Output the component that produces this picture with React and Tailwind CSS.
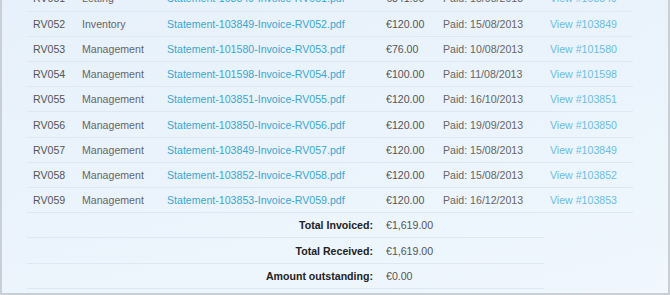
import React from "react";

const rows = [
  { ref: "RV051", cat: "Letting", stmt: "103849", amount: "€341.00", paid: "15/08/2013" },
  { ref: "RV052", cat: "Inventory", stmt: "103849", amount: "€120.00", paid: "15/08/2013" },
  { ref: "RV053", cat: "Management", stmt: "101580", amount: "€76.00", paid: "10/08/2013" },
  { ref: "RV054", cat: "Management", stmt: "101598", amount: "€100.00", paid: "11/08/2013" },
  { ref: "RV055", cat: "Management", stmt: "103851", amount: "€120.00", paid: "16/10/2013" },
  { ref: "RV056", cat: "Management", stmt: "103850", amount: "€120.00", paid: "19/09/2013" },
  { ref: "RV057", cat: "Management", stmt: "103849", amount: "€120.00", paid: "15/08/2013" },
  { ref: "RV058", cat: "Management", stmt: "103852", amount: "€120.00", paid: "15/08/2013" },
  { ref: "RV059", cat: "Management", stmt: "103853", amount: "€120.00", paid: "16/12/2013" },
];

const totals = [
  { label: "Total Invoiced:", value: "€1,619.00" },
  { label: "Total Received:", value: "€1,619.00" },
  { label: "Amount outstanding:", value: "€0.00" },
];

const App = () => {
  return (
    <div className="w-[670px] h-[295px] overflow-hidden border-l-2 border-r-2 border-b-2 border-[#c9cfd5] bg-[linear-gradient(165deg,#e7f1fb_0%,#ebf4fc_55%,#f0f7fe_100%)] font-['Liberation_Sans',sans-serif] text-[10.6px]">
      <div className="pl-[25px] -mt-[14px]">
        <table className="border-collapse table-fixed w-[606px]">
          <colgroup>
            <col className="w-[49px]" />
            <col className="w-[85px]" />
            <col className="w-[219px]" />
            <col className="w-[57px]" />
            <col className="w-[107px]" />
            <col className="w-[89px]" />
          </colgroup>
          <tbody>
            {rows.map((r) => (
              <tr key={r.ref} className="h-[25.2px] border-b border-[#dde8f2]">
                <td className="pl-[6px] pt-[2px] text-[#555]">{r.ref}</td>
                <td className="pl-[6px] pt-[2px] text-[#666]">{r.cat}</td>
                <td className="pl-[6px] pt-[2px] text-[#3aa7d1] whitespace-nowrap">
                  Statement-{r.stmt}-Invoice-{r.ref}.pdf
                </td>
                <td className="pl-[6px] pt-[2px] text-[#555]">{r.amount}</td>
                <td className="pl-[6px] pt-[2px] text-[#666]">Paid: {r.paid}</td>
                <td className="pl-[6px] pt-[2px] text-[#6cbde2]">View #{r.stmt}</td>
              </tr>
            ))}
            {totals.map((t) => (
              <tr key={t.label} className="h-[25.2px]">
                <td colSpan={3} className="border-b border-[#dde8f2] pr-[7px] pt-[2px] text-right font-bold text-[#222]">
                  {t.label}
                </td>
                <td className="border-b border-[#dde8f2] pl-[6px] pt-[2px] text-[#555]">{t.value}</td>
                <td className="border-b border-[#dde8f2]"></td>
                <td></td>
              </tr>
            ))}
          </tbody>
        </table>
      </div>
    </div>
  );
};

export default App;
